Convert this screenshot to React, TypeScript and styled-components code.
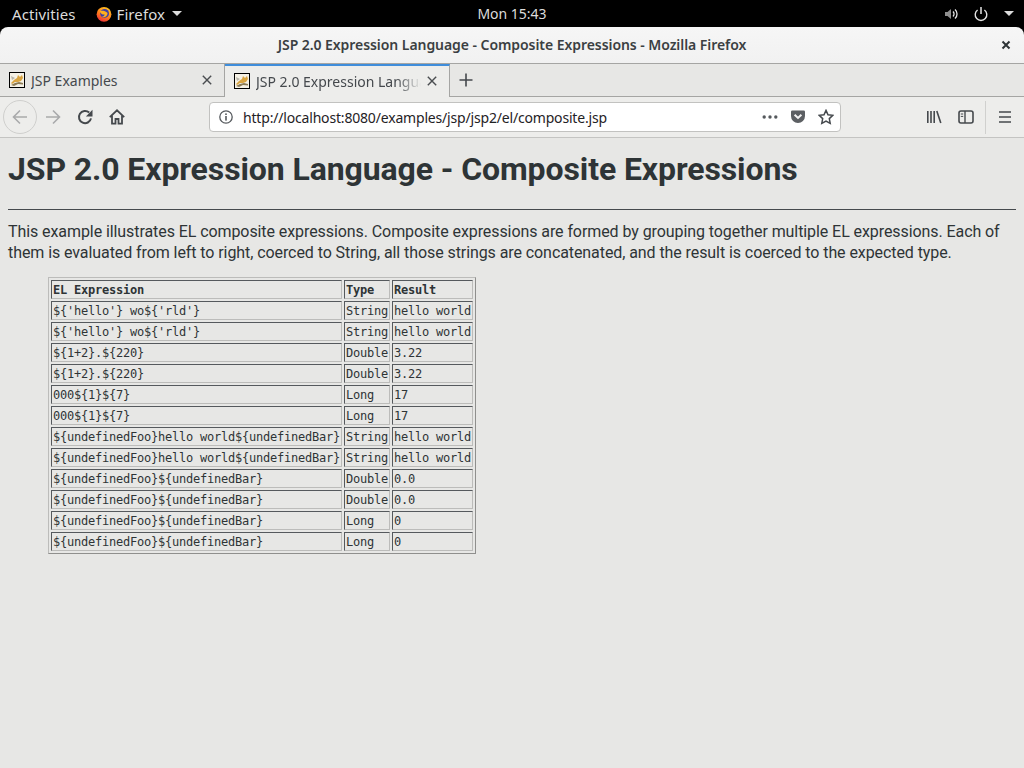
import React from "react";
import styled, { createGlobalStyle } from "styled-components";

const GlobalStyle = createGlobalStyle`
    html, body {
        margin: 0;
        padding: 0;
        background: #e7e7e5;
    }
`;

const rows: [string, string, string][] = [
    ["${'hello'} wo${'rld'}", "String", "hello world"],
    ["${'hello'} wo${'rld'}", "String", "hello world"],
    ["${1+2}.${220}", "Double", "3.22"],
    ["${1+2}.${220}", "Double", "3.22"],
    ["000${1}${7}", "Long", "17"],
    ["000${1}${7}", "Long", "17"],
    ["${undefinedFoo}hello world${undefinedBar}", "String", "hello world"],
    ["${undefinedFoo}hello world${undefinedBar}", "String", "hello world"],
    ["${undefinedFoo}${undefinedBar}", "Double", "0.0"],
    ["${undefinedFoo}${undefinedBar}", "Double", "0.0"],
    ["${undefinedFoo}${undefinedBar}", "Long", "0"],
    ["${undefinedFoo}${undefinedBar}", "Long", "0"],
];

const Favicon = () => (
    <FaviconBox viewBox="0 0 16 16" width={16} height={16}>
        <rect x="0.5" y="0.5" width="15" height="15" fill="#f6f2e6" stroke="#000" />
        <path d="M2 11 L5 8 L8 6 L9 3 L11 5 L13 3 L14 6 L12 9 L9 10 L6 10 L3 12 Z" fill="#d9a441" />
        <path d="M2 13 L6 11 L10 10 L14 11 L14 12.5 L9 12 L5 14 Z" fill="#8a7a55" />
        <path d="M2 4 L6 6 L3 8 Z" fill="#b9b6aa" />
    </FaviconBox>
);

const FirefoxLogo = () => (
    <svg viewBox="0 0 16 16" width={16} height={16}>
        <defs>
            <linearGradient id="fxBody" x1="0.7" y1="0" x2="0.2" y2="1">
                <stop offset="0" stopColor="#ffc41f" />
                <stop offset="0.55" stopColor="#ff7a1c" />
                <stop offset="1" stopColor="#e9263f" />
            </linearGradient>
        </defs>
        <circle cx="8" cy="8.3" r="7.4" fill="url(#fxBody)" />
        <circle cx="8.6" cy="7.4" r="4.4" fill="#3d3fa8" />
        <path d="M3.6 5 C6 4.6 9.4 4.6 11.6 7 C11.6 10.6 8 12 5.8 10.8 C7.6 10.6 8.6 9.6 8.6 8.6 C6.6 8.8 4.4 7.6 3.6 5 Z" fill="#ffb01f" />
    </svg>
);

const BackIcon = () => (
    <NavSvg viewBox="0 0 16 16" $color="#a9aaab">
        <path d="M15 8H1.8M8 1.5 1.5 8 8 14.5" fill="none" stroke="currentColor" strokeWidth="1.6" />
    </NavSvg>
);

const ForwardIcon = () => (
    <NavSvg viewBox="0 0 16 16" $color="#a9aaab">
        <path d="M1 8H14.2M8 1.5 14.5 8 8 14.5" fill="none" stroke="currentColor" strokeWidth="1.6" />
    </NavSvg>
);

const ReloadIcon = () => (
    <NavSvg viewBox="0 0 16 16" $color="#45494d">
        <path d="M14 9.4A6.1 6.1 0 1 1 12.2 3.6" fill="none" stroke="currentColor" strokeWidth="2" />
        <path d="M15.5 0.8V7.4H8.9Z" fill="currentColor" />
    </NavSvg>
);

const HomeIcon = () => (
    <NavSvg viewBox="0 0 16 16" $color="#45494d">
        <path d="M0.8 8.2 8 1.3 15.2 8.2M3 6.8V14.7H6.5V10H9.5V14.7H13V6.8" fill="none" stroke="currentColor" strokeWidth="1.8" />
    </NavSvg>
);

const InfoIcon = () => (
    <NavSvg viewBox="0 0 16 16" $color="#55595d">
        <circle cx="8" cy="8" r="6.2" fill="none" stroke="currentColor" strokeWidth="1.3" />
        <rect x="7.2" y="7" width="1.6" height="4.6" fill="currentColor" />
        <rect x="7.2" y="4.4" width="1.6" height="1.6" fill="currentColor" />
    </NavSvg>
);

const DotsIcon = () => (
    <NavSvg viewBox="0 0 16 16" $color="#55595d">
        <circle cx="2.2" cy="8" r="1.7" fill="currentColor" />
        <circle cx="8" cy="8" r="1.7" fill="currentColor" />
        <circle cx="13.8" cy="8" r="1.7" fill="currentColor" />
    </NavSvg>
);

const PocketIcon = () => (
    <NavSvg viewBox="0 0 16 16" $color="#5c5f63">
        <path d="M2.3 1.5H13.7A1.3 1.3 0 0 1 15 2.8V7A7 7 0 0 1 1 7V2.8A1.3 1.3 0 0 1 2.3 1.5Z" fill="currentColor" />
        <path d="M4.6 5.8 8 9 11.4 5.8" fill="none" stroke="#f4f4f4" strokeWidth="2" />
    </NavSvg>
);

const StarIcon = () => (
    <NavSvg viewBox="0 0 16 16" $color="#45494d">
        <path d="M8 1.4 10 5.7 14.8 6.3 11.3 9.6 12.2 14.4 8 12 3.8 14.4 4.7 9.6 1.2 6.3 6 5.7Z" fill="none" stroke="currentColor" strokeWidth="1.5" />
    </NavSvg>
);

const LibraryIcon = () => (
    <NavSvg viewBox="0 0 16 16" $color="#45494d">
        <path d="M1.8 2V14M5 2V14M8.2 2V14M10.8 2 14.8 14" fill="none" stroke="currentColor" strokeWidth="1.6" />
    </NavSvg>
);

const SidebarIcon = () => (
    <NavSvg viewBox="0 0 16 16" $color="#45494d">
        <rect x="1" y="2" width="14" height="12" rx="2" fill="none" stroke="currentColor" strokeWidth="1.6" />
        <path d="M7 2V14" stroke="currentColor" strokeWidth="1.4" />
        <path d="M2.8 5H5.2M2.8 7.4H5.2" stroke="currentColor" strokeWidth="1" />
    </NavSvg>
);

const MenuIcon = () => (
    <NavSvg viewBox="0 0 16 16" $color="#45494d">
        <path d="M2 3H14M2 8H14M2 13H14" stroke="currentColor" strokeWidth="1.7" />
    </NavSvg>
);

const CloseGlyph = () => (
    <svg viewBox="0 0 10 10" width={10} height={10}>
        <path d="M0.8 0.8 9.2 9.2M9.2 0.8 0.8 9.2" stroke="#4a4d50" strokeWidth="1.4" />
    </svg>
);

const SpeakerIcon = () => (
    <svg viewBox="0 0 16 16" width={16} height={16}>
        <path d="M1 6H3.5L7 3V13L3.5 10H1Z" fill="#8f8f8f" />
        <path d="M9 5.5A3.5 3.5 0 0 1 9 10.5" fill="none" stroke="#e4e4e4" strokeWidth="1.3" />
        <path d="M11 3.5A6 6 0 0 1 11 12.5" fill="none" stroke="#e4e4e4" strokeWidth="1.3" />
    </svg>
);

const PowerIcon = () => (
    <svg viewBox="0 0 16 16" width={16} height={16}>
        <path d="M4.6 4A5.8 5.8 0 1 0 11.4 4" fill="none" stroke="#e4e4e4" strokeWidth="1.4" />
        <path d="M8 1V8" stroke="#e4e4e4" strokeWidth="1.5" />
    </svg>
);

export default function App() {
    return (
        <Screen>
            <GlobalStyle />
            <TopBar>
                <TopLeft>
                    <TopLabel>Activities</TopLabel>
                    <AppMenu>
                        <FirefoxLogo />
                        <TopLabel>Firefox</TopLabel>
                        <Caret />
                    </AppMenu>
                </TopLeft>
                <Clock>Mon 15:43</Clock>
                <TopRight>
                    <SpeakerIcon />
                    <PowerIcon />
                    <Caret />
                </TopRight>
            </TopBar>
            <TitleBar>
                <WindowTitle>JSP 2.0 Expression Language - Composite Expressions - Mozilla Firefox</WindowTitle>
                <WindowClose>
                    <svg viewBox="0 0 10 10" width={10} height={10}>
                        <path d="M1.5 1.5 8.5 8.5M8.5 1.5 1.5 8.5" stroke="#2e3436" strokeWidth="2" />
                    </svg>
                </WindowClose>
            </TitleBar>
            <TabStrip>
                <Tab>
                    <Favicon />
                    <TabLabel>JSP Examples</TabLabel>
                    <CloseGlyph />
                </Tab>
                <Tab $active>
                    <Favicon />
                    <TabLabel $fade>JSP 2.0 Expression Language</TabLabel>
                    <CloseGlyph />
                </Tab>
                <NewTab>
                    <svg viewBox="0 0 16 16" width={16} height={16}>
                        <path d="M8 1.5V14.5M1.5 8H14.5" stroke="#45494d" strokeWidth="1.6" />
                    </svg>
                </NewTab>
            </TabStrip>
            <NavBar>
                <BackCircle>
                    <BackIcon />
                </BackCircle>
                <NavButton>
                    <ForwardIcon />
                </NavButton>
                <NavButton>
                    <ReloadIcon />
                </NavButton>
                <NavButton>
                    <HomeIcon />
                </NavButton>
                <UrlBar>
                    <InfoIcon />
                    <UrlText>http://localhost:8080/examples/jsp/jsp2/el/composite.jsp</UrlText>
                    <DotsIcon />
                    <PocketIcon />
                    <StarIcon />
                </UrlBar>
                <NavTools>
                    <LibraryIcon />
                    <SidebarIcon />
                    <Divider />
                    <MenuIcon />
                </NavTools>
            </NavBar>
            <Page>
                <Heading>JSP 2.0 Expression Language - Composite Expressions</Heading>
                <Rule />
                <Intro>
                    This example illustrates EL composite expressions. Composite expressions are formed by grouping
                    together multiple EL expressions. Each of them is evaluated from left to right, coerced to String,
                    all those strings are concatenated, and the result is coerced to the expected type.
                </Intro>
                <Quote>
                    <ExprTable>
                        <thead>
                            <tr>
                                <HeadCell>EL Expression</HeadCell>
                                <HeadCell>Type</HeadCell>
                                <HeadCell>Result</HeadCell>
                            </tr>
                        </thead>
                        <tbody>
                            {rows.map((row, i) => (
                                <tr key={i}>
                                    {row.map((cell, j) => (
                                        <Cell key={j}>{cell}</Cell>
                                    ))}
                                </tr>
                            ))}
                        </tbody>
                    </ExprTable>
                </Quote>
            </Page>
        </Screen>
    );
}

const Screen = styled.div`
    width: 1024px;
    height: 768px;
    overflow: hidden;
    display: flex;
    flex-direction: column;
    background: #000;
    font-family: "Noto Sans", sans-serif;
`;

const TopBar = styled.div`
    height: 27px;
    flex: none;
    background: #000;
    color: #dcdcdc;
    display: grid;
    grid-template-columns: 1fr auto 1fr;
    align-items: center;
    font-size: 14px;
`;

const TopLeft = styled.div`
    display: flex;
    align-items: center;
    padding-left: 12px;
    gap: 20px;
`;

const TopLabel = styled.span`
    font-size: 15px;
    letter-spacing: 0.1px;
`;

const AppMenu = styled.div`
    display: flex;
    align-items: center;
    gap: 5px;
`;

const Caret = styled.span`
    width: 0;
    height: 0;
    margin-left: 2px;
    border-left: 5px solid transparent;
    border-right: 5px solid transparent;
    border-top: 5px solid #dcdcdc;
`;

const Clock = styled.div`
    text-align: center;
`;

const TopRight = styled.div`
    display: flex;
    align-items: center;
    justify-content: flex-end;
    gap: 13px;
    padding-right: 10px;
`;

const TitleBar = styled.div`
    height: 37px;
    flex: none;
    box-sizing: border-box;
    position: relative;
    background: linear-gradient(#f6f6f6, #f1f1f1);
    border-radius: 8px 8px 0 0;
    border-bottom: 1px solid #a5a5a3;
    padding-bottom: 2px;
    display: flex;
    align-items: center;
    justify-content: center;
`;

const WindowTitle = styled.div`
    font-size: 14px;
    font-weight: 600;
    letter-spacing: -0.06px;
    color: #3b3f42;
`;

const WindowClose = styled.div`
    position: absolute;
    right: 13px;
    top: 13px;
    line-height: 0;
`;

const TabStrip = styled.div`
    height: 33px;
    flex: none;
    background: #e7e7e5;
    border-bottom: 1px solid #a5a5a3;
    display: flex;
    box-sizing: border-box;
`;

const Tab = styled.div<{ $active?: boolean }>`
    width: 225px;
    box-sizing: border-box;
    height: ${({ $active }) => ($active ? "33px" : "32px")};
    display: flex;
    align-items: center;
    padding: ${({ $active }) => ($active ? "0 12px 1px 9px" : "0 12px 0 9px")};
    gap: 6px;
    font-size: 14px;
    color: #45494d;
    background: ${({ $active }) => ($active ? "#ededeb" : "transparent")};
    border-top: ${({ $active }) => ($active ? "2px solid #3f8ddb" : "none")};
    border-right: 1px solid #a5a5a3;
`;

const TabLabel = styled.span<{ $fade?: boolean }>`
    flex: 1;
    overflow: hidden;
    white-space: nowrap;
    ${({ $fade }) =>
        $fade &&
        `
        -webkit-mask-image: linear-gradient(to right, #000 85%, transparent);
        mask-image: linear-gradient(to right, #000 85%, transparent);
    `}
`;

const FaviconBox = styled.svg`
    flex: none;
`;

const NewTab = styled.div`
    width: 32px;
    display: flex;
    align-items: center;
    justify-content: center;
`;

const NavBar = styled.div`
    height: 41px;
    flex: none;
    box-sizing: border-box;
    background: #ededeb;
    border-bottom: 1px solid #c4c4c2;
    display: flex;
    align-items: center;
    padding-left: 3px;
`;

const NavSvg = styled.svg<{ $color: string }>`
    width: 16px;
    height: 16px;
    flex: none;
    color: ${({ $color }) => $color};
`;

const BackCircle = styled.div`
    width: 34px;
    height: 34px;
    box-sizing: border-box;
    border: 1px solid #cfcfcd;
    border-radius: 50%;
    display: flex;
    align-items: center;
    justify-content: center;
`;

const NavButton = styled.div`
    width: 32px;
    display: flex;
    justify-content: center;
`;

const UrlBar = styled.div`
    width: 632px;
    height: 30px;
    margin-left: 76px;
    box-sizing: border-box;
    background: #fff;
    border: 1px solid #c2c2c0;
    border-radius: 4px;
    display: flex;
    align-items: center;
    padding: 0 6px 0 8px;
    gap: 12px;
`;

const UrlText = styled.span`
    flex: 1;
    font-size: 14px;
    letter-spacing: -0.18px;
    color: #1f2225;
    margin-left: -3px;
`;

const NavTools = styled.div`
    display: flex;
    align-items: center;
    margin-left: 85px;
    gap: 16px;
`;

const Divider = styled.div`
    width: 1px;
    height: 33px;
    margin: 0 -5px;
    background: #d0d0ce;
`;

const Page = styled.div`
    flex: 1;
    background: #e7e7e5;
    padding: 8px;
    color: #2e3436;
    font-family: Roboto, sans-serif;
    font-size: 16px;
`;

const Heading = styled.h1`
    margin: 7px 0 24px;
    font-size: 32px;
    font-weight: 700;
    line-height: 32px;
    letter-spacing: -0.1px;
`;

const Rule = styled.hr`
    margin: 0 0 11px;
    border: none;
    height: 1px;
    background: #45494d;
`;

const Intro = styled.p`
    margin: 0 0 14px;
    line-height: 21px;
    letter-spacing: -0.08px;
`;

const Quote = styled.blockquote`
    margin: 0 0 0 40px;
`;

const ExprTable = styled.table`
    border: 1px solid;
    border-color: #bcbcba #8f8f8d #8f8f8d #bcbcba;
    border-spacing: 2px;
    border-collapse: separate;
    font-family: "DejaVu Sans Mono", monospace;
    font-size: 12px;
    letter-spacing: -0.224px;
    color: #2e3436;
`;

const Cell = styled.td`
    border: 1px solid;
    border-color: #55595d #bcbcba #bcbcba #55595d;
    padding: 2px 1px 0;
    line-height: 15px;
    white-space: nowrap;
`;

const HeadCell = styled(Cell).attrs({ as: "th" })`
    font-weight: 700;
    text-align: left;
`;
